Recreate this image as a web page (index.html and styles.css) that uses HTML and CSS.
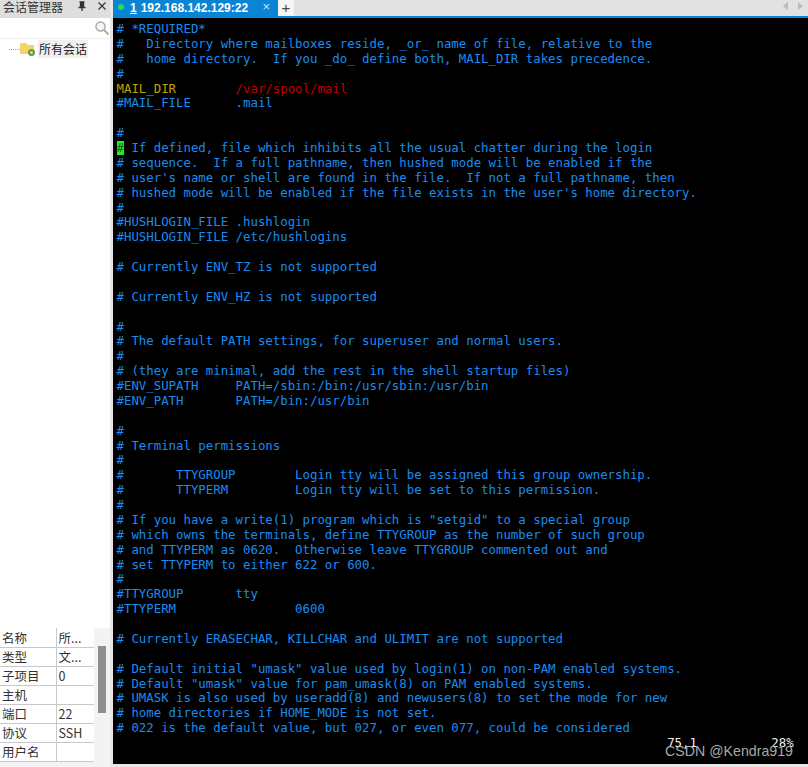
FILE: index.html
```html
<!DOCTYPE html>
<html lang="zh">
<head>
<meta charset="utf-8">
<title>Xshell</title>
<link rel="stylesheet" href="styles.css">
</head>
<body>
<div class="app">
  <aside class="side">
    <header class="side-head">
      <span class="side-title">会话管理器</span>
      <svg class="pin" width="10" height="11" viewBox="0 0 10 11"><path d="M2.500 1h5M3.500 1v5h3V1M1.500 6.500h7M5 6.500V10" fill="none" stroke="#333" stroke-width="1.300"/><rect x="3.500" y="1" width="3" height="5" fill="#333"/></svg>
      <svg class="close" width="10" height="10" viewBox="0 0 10 10"><path d="M1.500 1.500l7 7M8.500 1.500l-7 7" stroke="#333" stroke-width="1.200"/></svg>
    </header>
    <div class="search">
      <svg width="16" height="16" viewBox="0 0 16 16"><circle cx="6.500" cy="6.500" r="4.500" fill="#f4f4f4" stroke="#aaa" stroke-width="1.500"/><path d="M10 10l4.500 4.500" stroke="#c8a878" stroke-width="2"/></svg>
    </div>
    <div class="tree">
      <span class="dash"></span>
      <svg class="folder" width="17" height="15" viewBox="0 0 17 15"><path d="M0 1h6l1.500 2H14v9H0z" fill="#f4d36a"/><circle cx="11.500" cy="10.500" r="3.500" fill="#6d9a35"/><circle cx="11.500" cy="10.500" r="1.300" fill="#dcebc0"/></svg>
      <span class="tree-label">所有会话</span>
    </div>
    <div class="props">
      <table class="prop-table">
        <tr><td>名称</td><td>所...</td></tr>
        <tr><td>类型</td><td>文...</td></tr>
        <tr><td>子项目</td><td>0</td></tr>
        <tr><td>主机</td><td></td></tr>
        <tr><td>端口</td><td>22</td></tr>
        <tr><td>协议</td><td>SSH</td></tr>
        <tr><td>用户名</td><td></td></tr>
      </table>
      <div class="scroll"><div class="thumb"></div></div>
    </div>
  </aside>
  <main class="main">
    <nav class="tabs">
      <div class="tab">
        <span class="dot"></span>
        <span class="tab-num">1</span>
        <span class="tab-name">192.168.142.129:22</span>
        <span class="tab-x">×</span>
      </div>
      <div class="tab-add">+</div>
      <div class="arrows">
        <span class="arrow-l"></span>
        <span class="arrow-r"></span>
      </div>
    </nav>
    <pre class="term"># *REQUIRED*
#   Directory where mailboxes reside, _or_ name of file, relative to the
#   home directory.  If you _do_ define both, MAIL_DIR takes precedence.
#
<span class="y">MAIL_DIR</span>        <span class="r">/var/spool/mail</span>
#MAIL_FILE      .mail

#
<span class="cur">#</span> If defined, file which inhibits all the usual chatter during the login
# sequence.  If a full pathname, then hushed mode will be enabled if the
# user's name or shell are found in the file.  If not a full pathname, then
# hushed mode will be enabled if the file exists in the user's home directory.
#
#HUSHLOGIN_FILE .hushlogin
#HUSHLOGIN_FILE /etc/hushlogins

# Currently ENV_TZ is not supported

# Currently ENV_HZ is not supported

#
# The default PATH settings, for superuser and normal users.
#
# (they are minimal, add the rest in the shell startup files)
#ENV_SUPATH     PATH=/sbin:/bin:/usr/sbin:/usr/bin
#ENV_PATH       PATH=/bin:/usr/bin

#
# Terminal permissions
#
#       TTYGROUP        Login tty will be assigned this group ownership.
#       TTYPERM         Login tty will be set to this permission.
#
# If you have a write(1) program which is "setgid" to a special group
# which owns the terminals, define TTYGROUP as the number of such group
# and TTYPERM as 0620.  Otherwise leave TTYGROUP commented out and
# set TTYPERM to either 622 or 600.
#
#TTYGROUP       tty
#TTYPERM                0600

# Currently ERASECHAR, KILLCHAR and ULIMIT are not supported

# Default initial "umask" value used by login(1) on non-PAM enabled systems.
# Default "umask" value for pam_umask(8) on PAM enabled systems.
# UMASK is also used by useradd(8) and newusers(8) to set the mode for new
# home directories if HOME_MODE is not set.
# 022 is the default value, but 027, or even 077, could be considered
<span class="w">                                                                          75,1          28%</span></pre>
    <div class="mark">CSDN @Kendra919</div>
  </main>
</div>
</body>
</html>
```
FILE: styles.css
```css
* { box-sizing: border-box; }
html, body { margin: 0; height: 100%; overflow: hidden; }
body { background: #e6e6e6; font-family: "Noto Sans CJK SC", "Liberation Sans", sans-serif; color: #222; }
.app { display: grid; grid-template-columns: 110px 1fr; height: 767px; }

.side { display: flex; flex-direction: column; background: #fff; height: 767px; }
.side-head { height: 18px; background: #dedede; display: flex; align-items: flex-start; padding: 0 3px; font-size: 12px; }
.side-title { flex: 1; line-height: 14px; color: #333; }
.pin { margin: 1px 10px 0 0; }
.close { margin-top: 1px; }
.search { height: 21px; display: flex; justify-content: flex-end; align-items: center; background: #fff; border-bottom: 1px solid #eee; }
.tree { display: flex; align-items: center; height: 20px; padding-left: 9px; flex: none; }
.dash { width: 11px; border-top: 1px dotted #aaa; }
.folder { flex: none; margin-right: 1px; }
.tree-label { font-size: 12px; background: #f0f0f0; padding: 0 1px; line-height: 18px; color: #222; }

.props { margin-top: auto; display: flex; background: #f3f3f3; height: 139px; overflow: hidden; }
.prop-table { border-collapse: collapse; table-layout: fixed; width: 94px; font-size: 12.500px; background: #fff; flex: none; align-self: flex-start; }
.prop-table tr { height: 19px; }
.prop-table td { padding: 0 2px; border-bottom: 1px solid #c8c8c8; line-height: 17px; height: 19px; white-space: nowrap; overflow: hidden; color: #333; }
.prop-table td:first-child { width: 56px; border-right: 1px solid #c8c8c8; }
.scroll { flex: 1; padding: 18px 4px 0; }
.thumb { width: 8px; height: 67px; background: #8f8f8f; }

.main { position: relative; display: flex; flex-direction: column; padding-left: 3px; height: 767px; background: #e6e6e6; }
.tabs { display: flex; height: 18px; flex: none; background: #e2e2e2; border-bottom: 2px solid #0a84d4; }
.tab { width: 165px; background: #0a84d4; color: #fff; display: flex; align-items: center; padding-left: 5px; font-family: "Liberation Sans", sans-serif; font-size: 12px; font-weight: bold; height: 16px; }
.dot { width: 6px; height: 6px; border-radius: 50%; background: #22dd55; margin: 0 6px 3px 0; }
.tab-num { text-decoration: underline; margin-right: 4px; }
.tab-name { flex: 1; }
.tab-x { font-weight: normal; color: #cfe6f6; font-size: 13px; line-height: 13px; margin: 0 8px 3px 0; }
.tab-add { width: 16px; height: 16px; background: #f5f5f5; color: #444; font: 15px/15px "Liberation Sans", sans-serif; text-align: center; }
.arrows { margin-left: auto; display: flex; gap: 10px; align-items: center; padding: 0 5px 4px 0; }
.arrow-l { border: 4px solid transparent; border-left: 0; border-right: 5px solid #bbb; }
.arrow-r { border: 4px solid transparent; border-right: 0; border-left: 5px solid #bbb; }

.term { flex: 1; margin: 0 0 3px; padding: 4px 0 0 3.500px; background: #000; color: #1a8cf0; font-family: "DejaVu Sans Mono", monospace; font-size: 12.370px; line-height: 14.880px; overflow: hidden; white-space: pre; }
.y { color: #c0a000; }
.r { color: #c00000; }
.w { color: #f0f0f0; }
.cur { background: #22ee22; color: #0a6a0a; }
.mark { position: absolute; right: 15px; bottom: 7px; color: #a8a8a8; font: 14.200px/18px "Liberation Sans", sans-serif; }
```
